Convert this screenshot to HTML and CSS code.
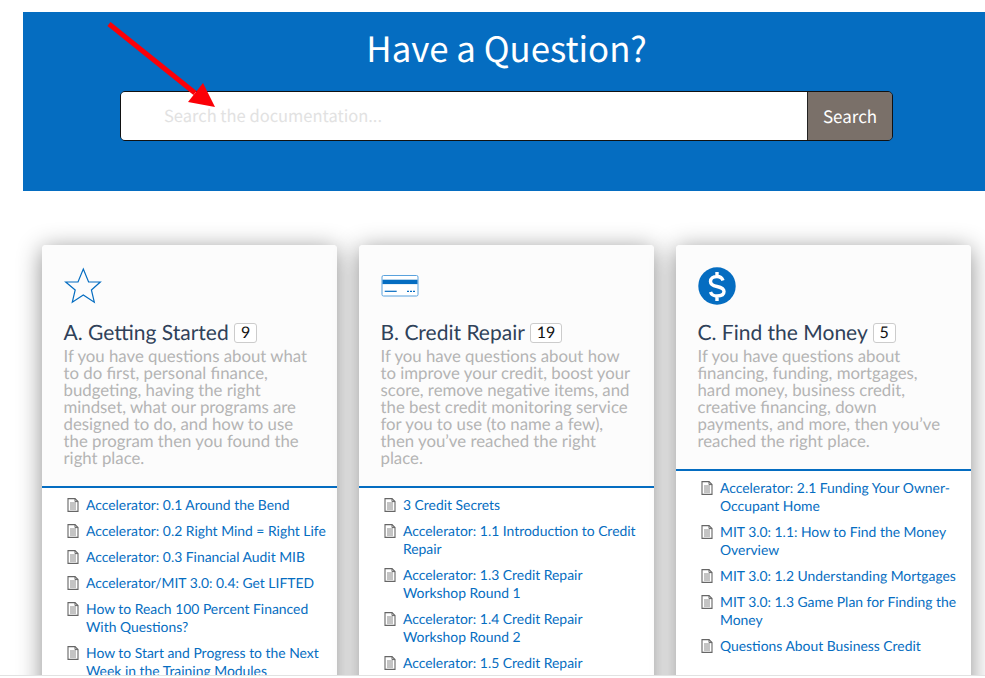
FILE: index.html
```html
<!DOCTYPE html>
<html lang="en">
<head>
<meta charset="utf-8">
<title>Have a Question?</title>
<link rel="stylesheet" href="styles.css">
</head>
<body>
<svg class="defs" width="0" height="0" aria-hidden="true">
  <symbol id="doc" viewBox="0 0 12 14">
    <path d="M1 .6h7l3 3v9.8H1z" fill="#fff" stroke="#666" stroke-width="1.1"/>
    <path d="M8 .6v3h3" fill="none" stroke="#666" stroke-width="1"/>
    <path d="M3 5h6M3 7h6M3 9h6M3 11h6" stroke="#888" stroke-width="1"/>
  </symbol>
</svg>
<div class="page">
  <header class="hero">
    <h1 class="hero-title">Have a Question?</h1>
    <form class="search">
      <div class="search-input">Search the documentation...</div>
      <div class="search-btn">Search</div>
    </form>
  </header>
  <main class="cards">
    <section class="card">
      <div class="card-head">
        <svg class="card-icon" viewBox="0 0 38 38"><polygon points="19.3,2 24.6,15 36.3,15 27.4,23 30.3,35.2 19.3,28 8.3,35.2 11.2,23 1.7,15 14,15" fill="none" stroke="#056dc1" stroke-width="1.2"/></svg>
        <h2 class="card-title">A. Getting Started <span class="count">9</span></h2>
        <p class="card-desc">If you have questions about what to do first, personal finance, budgeting, having the right mindset, what our programs are designed to do, and how to use the program then you found the right place.</p>
      </div>
      <ul class="links">
        <li><svg class="doc"><use href="#doc"/></svg><a>Accelerator: 0.1 Around the Bend</a></li>
        <li><svg class="doc"><use href="#doc"/></svg><a>Accelerator: 0.2 Right Mind = Right Life</a></li>
        <li><svg class="doc"><use href="#doc"/></svg><a>Accelerator: 0.3 Financial Audit MIB</a></li>
        <li><svg class="doc"><use href="#doc"/></svg><a>Accelerator/MIT 3.0: 0.4: Get LIFTED</a></li>
        <li><svg class="doc"><use href="#doc"/></svg><a>How to Reach 100 Percent Financed With Questions?</a></li>
        <li><svg class="doc"><use href="#doc"/></svg><a>How to Start and Progress to the Next Week in the Training Modules</a></li>
      </ul>
    </section>
    <section class="card">
      <div class="card-head">
        <svg class="card-icon" viewBox="0 0 38 38"><rect x="1" y="8.500" width="36" height="20.500" rx="1.500" fill="#fff" stroke="#5aa2dd" stroke-width="1"/><rect x="1.500" y="12.700" width="35" height="4.400" fill="#056dc1"/><path d="M3.700 24.300h12" stroke="#056dc1" stroke-width="1.200"/><path d="M26 24.300h2M29 24.300h2M32 24.300h2" stroke="#056dc1" stroke-width="1.200"/></svg>
        <h2 class="card-title">B. Credit Repair <span class="count">19</span></h2>
        <p class="card-desc">If you have questions about how to improve your credit, boost your score, remove negative items, and the best credit monitoring service for you to use (to name a few), then you’ve reached the right place.</p>
      </div>
      <ul class="links">
        <li><svg class="doc"><use href="#doc"/></svg><a>3 Credit Secrets</a></li>
        <li><svg class="doc"><use href="#doc"/></svg><a>Accelerator: 1.1 Introduction to Credit Repair</a></li>
        <li><svg class="doc"><use href="#doc"/></svg><a>Accelerator: 1.3 Credit Repair Workshop Round 1</a></li>
        <li><svg class="doc"><use href="#doc"/></svg><a>Accelerator: 1.4 Credit Repair Workshop Round 2</a></li>
        <li><svg class="doc"><use href="#doc"/></svg><a>Accelerator: 1.5 Credit Repair</a></li>
      </ul>
    </section>
    <section class="card">
      <div class="card-head">
        <svg class="card-icon" viewBox="0 0 38 38"><circle cx="19" cy="19" r="18.700" fill="#056dc1"/><path d="M25 13.500C24 10.500 21.500 9.500 19 9.500C15 9.500 12.500 11.500 12.500 14.500C12.500 18 15.500 18.800 19 19.500C23 20.300 26 21.500 26 24.500C26 27.500 23 29 19 29C16 29 13.500 28 12.500 25M19 5v4.500M19 29v5" fill="none" stroke="#fff" stroke-width="3.400"/></svg>
        <h2 class="card-title">C. Find the Money <span class="count">5</span></h2>
        <p class="card-desc">If you have questions about financing, funding, mortgages, hard money, business credit, creative financing, down payments, and more, then you’ve reached the right place.</p>
      </div>
      <ul class="links">
        <li><svg class="doc"><use href="#doc"/></svg><a>Accelerator: 2.1 Funding Your Owner-Occupant Home</a></li>
        <li><svg class="doc"><use href="#doc"/></svg><a>MIT 3.0: 1.1: How to Find the Money Overview</a></li>
        <li><svg class="doc"><use href="#doc"/></svg><a>MIT 3.0: 1.2 Understanding Mortgages</a></li>
        <li><svg class="doc"><use href="#doc"/></svg><a>MIT 3.0: 1.3 Game Plan for Finding the Money</a></li>
        <li><svg class="doc"><use href="#doc"/></svg><a>Questions About Business Credit</a></li>
      </ul>
    </section>
  </main>
  <svg class="arrow" width="120" height="110" viewBox="0 0 120 110"><path d="M2 2L88 71" stroke="#fb0007" stroke-width="5" fill="none"/><path d="M108 85L81 80L96 61Z" fill="#fb0007"/></svg>
</div>
</body>
</html>
```
FILE: styles.css
```css
* { box-sizing: border-box; }
html, body { margin: 0; height: 678px; overflow: hidden; background: #fff; }
.defs { position: absolute; }
.page { position: relative; height: 676px; overflow: hidden; padding: 12px 0 0 23px; border-bottom: 1px solid #e2e2e2; font-family: Lato, sans-serif; text-rendering: geometricPrecision; }
.hero { height: 179px; background: #056dc1; padding: 13px 0 0 5px; display: flex; flex-direction: column; align-items: center; }
.hero-title { margin: 0; height: 66px; font: 400 34.8px/46px "Noto Sans CJK SC", sans-serif; color: #fff; }
.search { display: flex; width: 773px; height: 50px; border: 1px solid #111; border-radius: 5px; overflow: hidden; font-family: "Noto Sans CJK SC", sans-serif; }
.search-input { flex: 1; background: #fff; color: #e2e2e2; padding-left: 43px; font-size: 16.5px; line-height: 47px; }
.search-btn { width: 85px; background: #7a7069; border-left: 1px solid #222; color: #fff; text-align: center; font-size: 17px; line-height: 47px; }
.cards { display: flex; gap: 22px; margin: 54px 0 0 19px; align-items: stretch; height: 500px; }
.card { width: 295px; flex: none; background: #fff; border-radius: 4px; box-shadow: 0 4px 25px rgba(0,0,0,.45); overflow: hidden; }
.card-head { background: #fcfcfc; padding: 22px 21.5px 20px; border-bottom: 2px solid #056dc1; }
.card-icon { display: block; width: 38px; height: 38px; }
.card-title { margin: 15px 0 0; font: 400 21px/26px Lato, sans-serif; color: #2f4159; }
.count { display: inline-block; vertical-align: 2px; min-width: 23px; height: 20px; padding: 0 6px; border: 1px solid #ccc; border-radius: 3px; background: #fff; color: #111; font-size: 16px; line-height: 18px; text-align: center; }
.card-desc { margin: 1px 0 0; font-size: 16.8px; line-height: 17px; color: #b4b4b4; }
.links { list-style: none; margin: 0; padding: 8px 0 0 25px; }
.links li { position: relative; padding: 0 8px 8px 19px; font-size: 13.9px; line-height: 18px; color: #056dc1; }
.doc { position: absolute; left: 0; top: 2px; width: 12px; height: 14px; }
.arrow { position: absolute; left: 107px; top: 22px; }
```
